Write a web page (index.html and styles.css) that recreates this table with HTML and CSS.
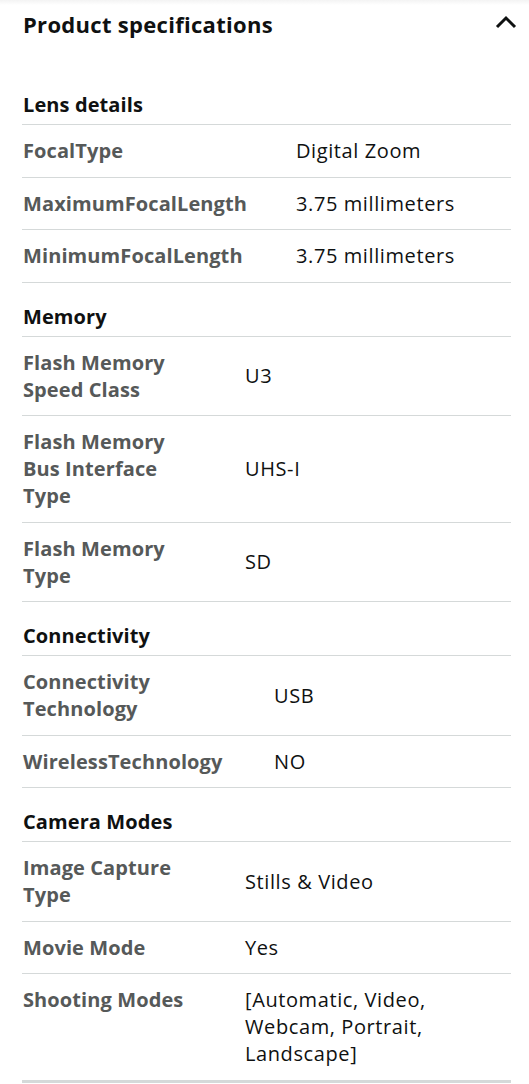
FILE: index.html
```html
<!DOCTYPE html>
<html lang="en">
<head>
  <meta charset="UTF-8">
  <title>Product specifications</title>
  <link rel="stylesheet" href="styles.css">
</head>
<body>

<div class="specPanel">
  <div class="panelHeader">
    <h2>Product specifications</h2>
    <svg class="chevron" width="22" height="16" viewBox="0 0 22 16">
      <path d="M2 13 L11 4 L20 13" fill="none" stroke="#0f1111" stroke-width="3"/>
    </svg>
  </div>

  <!-- Lens details -->
  <div class="specGroup">
    <div class="groupTitle">Lens details</div>
    <div class="specTable lens">
      <div class="specRow"><div class="specLabel">FocalType</div><div class="specValue">Digital Zoom</div></div>
      <div class="specRow"><div class="specLabel">MaximumFocalLength</div><div class="specValue">3.75 millimeters</div></div>
      <div class="specRow"><div class="specLabel">MinimumFocalLength</div><div class="specValue">3.75 millimeters</div></div>
    </div>
  </div>

  <!-- Memory -->
  <div class="specGroup">
    <div class="groupTitle">Memory</div>
    <div class="specTable memory">
      <div class="specRow"><div class="specLabel">Flash Memory Speed Class</div><div class="specValue">U3</div></div>
      <div class="specRow"><div class="specLabel">Flash Memory Bus Interface Type</div><div class="specValue">UHS-I</div></div>
      <div class="specRow"><div class="specLabel">Flash Memory Type</div><div class="specValue">SD</div></div>
    </div>
  </div>

  <!-- Connectivity -->
  <div class="specGroup">
    <div class="groupTitle">Connectivity</div>
    <div class="specTable connectivity">
      <div class="specRow"><div class="specLabel">Connectivity Technology</div><div class="specValue">USB</div></div>
      <div class="specRow"><div class="specLabel">WirelessTechnology</div><div class="specValue">NO</div></div>
    </div>
  </div>

  <!-- Camera Modes -->
  <div class="specGroup last">
    <div class="groupTitle">Camera Modes</div>
    <div class="specTable camera">
      <div class="specRow"><div class="specLabel">Image Capture Type</div><div class="specValue">Stills &amp; Video</div></div>
      <div class="specRow"><div class="specLabel">Movie Mode</div><div class="specValue">Yes</div></div>
      <div class="specRow"><div class="specLabel">Shooting Modes</div><div class="specValue">[Automatic, Video, Webcam, Portrait, Landscape]</div></div>
    </div>
  </div>
</div>

</body>
</html>
```

FILE: styles.css
```css
body {
  margin: 0;
  font-family: "Open Sans", "Noto Sans", Arial, sans-serif;
  background: #fff;
  color: #0f1111;
}

.specPanel {
  padding: 0 18px 0 22px;
  background: linear-gradient(#f3f3f3, #fff 5px);
}

.panelHeader {
  display: flex;
  align-items: center;
  justify-content: space-between;
  height: 48px;
}

.panelHeader h2 {
  margin: 0;
  padding-left: 1px;
  font-size: 22px;
  letter-spacing: 0.3px;
  font-weight: bold;
  color: #0f1111;
}

.chevron { margin-right: -6px; margin-top: -5px; }

.specGroup { margin-top: 23px; }
.specGroup + .specGroup { margin-top: 0; }

.groupTitle {
  padding: 20px 0 6px 1px;
  font-size: 20px;
  line-height: 27px;
  letter-spacing: 0.1px;
  font-weight: bold;
  color: #0f1111;
  border-bottom: 1px solid #d5d9d9;
}

.specGroup:first-of-type .groupTitle { padding-top: 0; }

.specRow {
  display: grid;
  align-items: center;
  padding: 12px 0 12.5px 1px;
  border-bottom: 1px solid #d5d9d9;
  font-size: 20px;
  line-height: 27px;
}

.lens .specRow { grid-template-columns: 273px 1fr; }
.memory .specRow { grid-template-columns: 222px 1fr; }
.connectivity .specRow { grid-template-columns: 251px 1fr; }
.camera .specRow { grid-template-columns: 222px 1fr; }

.memory .specLabel { padding-right: 50px; }
.camera .specLabel { padding-right: 50px; }
.connectivity .specLabel { padding-right: 90px; }

.specLabel {
  font-weight: bold;
  letter-spacing: 0.1px;
  color: #565959;
}

.specValue {
  color: #0f1111;
  letter-spacing: 0.6px;
  padding-right: 20px;
}

.camera .specRow:last-child { align-items: start; }

.last .specRow:last-child { border-bottom: 3px solid #d5d9d9; }
```
